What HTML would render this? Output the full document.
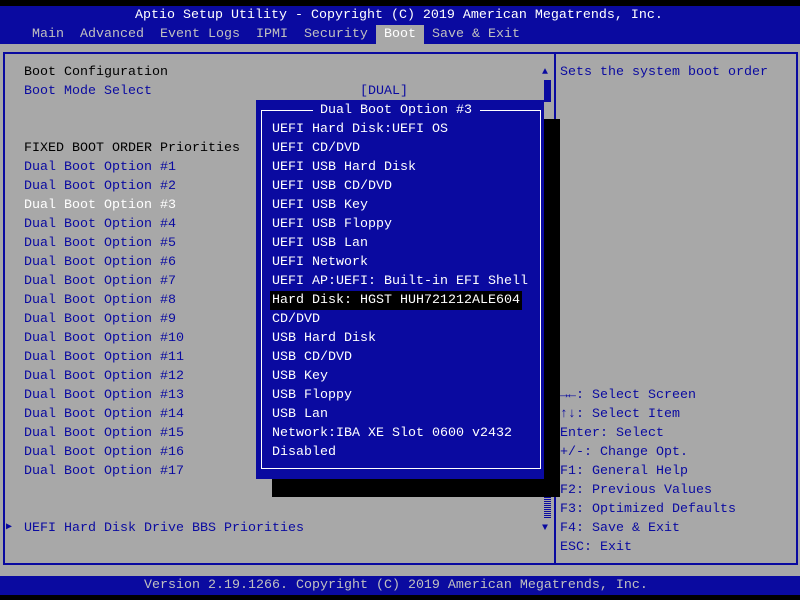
<!DOCTYPE html>
<html><head><meta charset="utf-8"><style>
body{margin:0;width:800px;height:600px;background:#000;position:relative;overflow:hidden;font-family:"Liberation Mono",monospace;font-size:13.33px;line-height:19px}
div{position:absolute;white-space:pre}
.b{color:#0a0aa0}.w{color:#fff}.k{color:#000}.g{color:#c0c0c0}
</style></head><body>
<div style="left:0;top:6px;width:800px;height:38px;background:#0a0aa0"></div>
<div style="left:0;top:44px;width:800px;height:532px;background:#a8a8a8"></div>
<div style="left:0;top:576px;width:800px;height:19px;background:#0a0aa0"></div>
<div class="w" style="left:135px;top:6px">Aptio Setup Utility - Copyright (C) 2019 American Megatrends, Inc.</div>
<div class="g" style="left:32px;top:25px">Main  Advanced  Event Logs  IPMI  Security</div>
<div style="left:376px;top:25px;width:48px;height:19px;background:#a8a8a8"></div>
<div class="w" style="left:384px;top:25px">Boot</div>
<div class="g" style="left:432px;top:25px">Save &amp; Exit</div>
<div class="g" style="left:144px;top:576px">Version 2.19.1266. Copyright (C) 2019 American Megatrends, Inc.</div>
<!-- frame -->
<div style="left:3px;top:52px;width:791px;height:509px;border:2px solid #0a0aa0"></div>
<div style="left:554px;top:54px;width:2px;height:509px;background:#0a0aa0"></div>
<!-- scrollbar -->
<div class="b" style="left:542px;top:63px;font-size:10px">▲</div>
<div style="left:544px;top:80px;width:7px;height:22px;background:#0a0aa0"></div>
<div style="left:544px;top:497px;width:7px;height:22px;background:repeating-linear-gradient(#0a0aa0 0 1px,#a8a8a8 1px 2px)"></div>
<div class="b" style="left:542px;top:519px;font-size:10px">▼</div>
<div class="k" style="left:24px;top:63px">Boot Configuration</div>
<div class="b" style="left:24px;top:82px">Boot Mode Select</div>
<div class="b" style="left:360px;top:82px">[DUAL]</div>
<div class="k" style="left:24px;top:139px">FIXED BOOT ORDER Priorities</div>
<div class="b" style="left:24px;top:158px">Dual Boot Option #1
Dual Boot Option #2
<span class="w">Dual Boot Option #3</span>
Dual Boot Option #4
Dual Boot Option #5
Dual Boot Option #6
Dual Boot Option #7
Dual Boot Option #8
Dual Boot Option #9
Dual Boot Option #10
Dual Boot Option #11
Dual Boot Option #12
Dual Boot Option #13
Dual Boot Option #14
Dual Boot Option #15
Dual Boot Option #16
Dual Boot Option #17</div>
<div class="b" style="left:6px;top:518px;font-size:10px">▶</div>
<div class="b" style="left:24px;top:519px">UEFI Hard Disk Drive BBS Priorities</div>
<div class="b" style="left:560px;top:63px">Sets the system boot order</div>
<div class="b" style="left:560px;top:386px">→←: Select Screen
↑↓: Select Item
Enter: Select
+/-: Change Opt.
F1: General Help
F2: Previous Values
F3: Optimized Defaults
F4: Save &amp; Exit
ESC: Exit</div>
<!-- popup -->
<div style="left:272px;top:119px;width:288px;height:378px;background:#000"></div>
<div style="left:256px;top:100px;width:288px;height:379px;background:#0a0aa0"></div>
<div style="left:261px;top:110px;width:278px;height:358px;border:1px solid #fff;border-top:none"></div>
<div style="left:261px;top:110px;width:52px;height:1px;background:#fff"></div>
<div style="left:480px;top:110px;width:60px;height:1px;background:#fff"></div>
<div class="w" style="left:320px;top:101px">Dual Boot Option #3</div>
<div style="left:270px;top:291px;width:252px;height:19px;background:#000"></div>
<div class="w" style="left:272px;top:120px">UEFI Hard Disk:UEFI OS
UEFI CD/DVD
UEFI USB Hard Disk
UEFI USB CD/DVD
UEFI USB Key
UEFI USB Floppy
UEFI USB Lan
UEFI Network
UEFI AP:UEFI: Built-in EFI Shell
Hard Disk: HGST HUH721212ALE604
CD/DVD
USB Hard Disk
USB CD/DVD
USB Key
USB Floppy
USB Lan
Network:IBA XE Slot 0600 v2432
Disabled</div>
</body></html>
